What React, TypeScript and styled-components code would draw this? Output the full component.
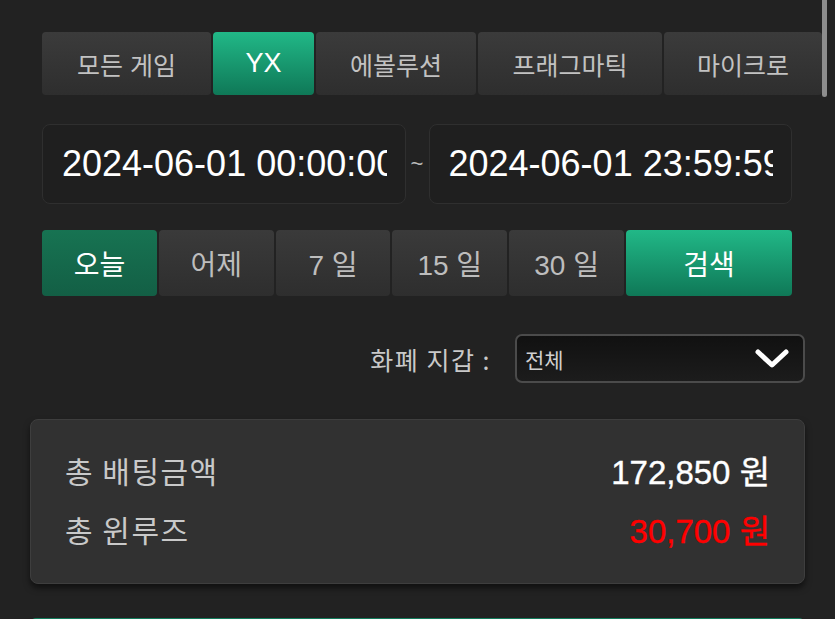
import React from "react";
import styled, { createGlobalStyle } from "styled-components";

const Global = createGlobalStyle`
  html, body { margin: 0; padding: 0; background: #222222; }
  body { font-family: "Liberation Sans", "Noto Sans CJK KR", sans-serif; overflow: hidden; }
  * { box-sizing: border-box; }
`;

const Page = styled.div`
  width: 835px;
  height: 619px;
  overflow: hidden;
  padding: 32px 30px 0 30px;
  display: flex;
  flex-direction: column;
  background: #222222;
  & > * { flex-shrink: 0; }
`;

const TabStrip = styled.div`
  margin: 0 -30px 0 12px;
  display: flex;
  gap: 2px;
  height: 63px;
  overflow: hidden;
`;

const Tab = styled.div<{ $w: number; $active?: boolean }>`
  flex: 0 0 ${(p) => p.$w}px;
  display: flex;
  align-items: center;
  justify-content: center;
  border-radius: 4px;
  font-family: "Liberation Sans", "Noto Sans CJK KR", sans-serif;
  color: ${(p) => (p.$active ? "#ffffff" : "#c2c2c2")};
  background: ${(p) =>
    p.$active
      ? "linear-gradient(180deg, #21b887 0%, #0f7857 100%)"
      : "linear-gradient(180deg, #3b3b3b 0%, #2e2e2e 100%)"};
  font-size: ${(p) => (p.$active ? "27px" : "25px")};
`;

const DateRow = styled.div`
  margin: 29px 13px 0 12px;
  display: grid;
  grid-template-columns: minmax(0, 1fr) 23px minmax(0, 1fr);
  align-items: center;
`;

const DateBox = styled.div`
  height: 80px;
  min-width: 0;
  border: 1px solid #2f2f2f;
  border-radius: 8px;
  background: #1f1f1f;
  padding: 0 18px 0 19px;
  display: flex;
  align-items: center;
`;

const DateText = styled.div`
  overflow: hidden;
  white-space: nowrap;
  min-width: 0;
  color: #ffffff;
  font-size: 36px;
  font-family: "Liberation Sans", sans-serif;
  line-height: 1.1;
`;

const Tilde = styled.div`
  text-align: center;
  color: #bbbbbb;
  font-size: 22px;
  font-family: "Liberation Sans", sans-serif;
`;

const PeriodRow = styled.div`
  margin: 26px 13px 0 12px;
  height: 66px;
  display: grid;
  grid-template-columns: repeat(5, 1fr) 166px;
  gap: 2px;
`;

const PeriodBtn = styled.div<{ $kind?: "today" | "search" }>`
  display: flex;
  align-items: center;
  justify-content: center;
  border-radius: 4px;
  font-size: 28px;
  font-family: "Liberation Sans", "Noto Sans CJK KR", sans-serif;
  color: ${(p) => (p.$kind ? "#ffffff" : "#bdbdbd")};
  background: ${(p) =>
    p.$kind === "today"
      ? "linear-gradient(180deg, #177352 0%, #135f45 100%)"
      : p.$kind === "search"
      ? "linear-gradient(180deg, #21b887 0%, #0f7857 100%)"
      : "linear-gradient(180deg, #3a3a3a 0%, #2e2e2e 100%)"};
`;

const WalletRow = styled.div`
  margin-top: 38px;
  display: flex;
  justify-content: flex-end;
  align-items: center;
  gap: 24px;
`;

const WalletLabel = styled.div`
  color: #c9c9c9;
  font-size: 25px;
  letter-spacing: 1.5px;
  font-family: "Noto Sans CJK KR", sans-serif;
`;

const Select = styled.div`
  width: 290px;
  height: 49px;
  border: 2px solid #4b4b4b;
  border-radius: 7px;
  background: linear-gradient(180deg, #111111 0%, #1c1c1c 100%);
  display: flex;
  align-items: center;
  justify-content: space-between;
  padding: 0 14px 0 8px;
`;

const SelectText = styled.span`
  color: #d0d0d0;
  font-size: 21px;
  font-family: "Noto Sans CJK KR", sans-serif;
`;

const Card = styled.div`
  margin-top: 36px;
  height: 165px;
  border: 1px solid #3e3e3e;
  border-radius: 8px;
  background: #313131;
  box-shadow: 0 4px 6px rgba(0, 0, 0, 0.55);
  padding: 30px 34px 0 34px;
  display: flex;
  flex-direction: column;
  gap: 19px;
`;

const CardRow = styled.div`
  height: 40px;
  display: flex;
  align-items: center;
  justify-content: space-between;
`;

const CardLabel = styled.span`
  color: #c9c9c9;
  font-size: 30px;
  letter-spacing: 1.5px;
  font-family: "Noto Sans CJK KR", sans-serif;
`;

const CardValue = styled.span<{ $red?: boolean }>`
  color: ${(p) => (p.$red ? "#ff0000" : "#ffffff")};
  font-size: 33px;
  font-family: "Liberation Sans", "Noto Sans CJK KR", sans-serif;
  -webkit-text-stroke: 0.4px ${(p) => (p.$red ? "#ff0000" : "#ffffff")};
`;

const BottomBar = styled.div`
  margin-top: 34px;
  height: 60px;
  border-radius: 6px 6px 0 0;
  background: linear-gradient(180deg, #127a5a 0%, #1a9d72 100%);
`;

const ScrollThumb = styled.div`
  position: fixed;
  top: -4px;
  right: 8px;
  width: 5px;
  height: 101px;
  border-radius: 3px;
  background: #8d8d8d;
`;

const tabs: { label: string; w: number; active?: boolean }[] = [
  { label: "모든 게임", w: 169 },
  { label: "YX", w: 101, active: true },
  { label: "에볼루션", w: 160 },
  { label: "프래그마틱", w: 184 },
  { label: "마이크로", w: 158 },
];

const periods = ["어제", "7 일", "15 일", "30 일"];

export default function App() {
  return (
    <>
      <Global />
      <Page>
        <TabStrip>
          {tabs.map((t) => (
            <Tab key={t.label} $w={t.w} $active={t.active}>
              {t.label}
            </Tab>
          ))}
        </TabStrip>
        <DateRow>
          <DateBox>
            <DateText>2024-06-01 00:00:00</DateText>
          </DateBox>
          <Tilde>~</Tilde>
          <DateBox>
            <DateText>2024-06-01 23:59:59</DateText>
          </DateBox>
        </DateRow>
        <PeriodRow>
          <PeriodBtn $kind="today">오늘</PeriodBtn>
          {periods.map((p) => (
            <PeriodBtn key={p}>{p}</PeriodBtn>
          ))}
          <PeriodBtn $kind="search">검색</PeriodBtn>
        </PeriodRow>
        <WalletRow>
          <WalletLabel>화폐 지갑 :</WalletLabel>
          <Select>
            <SelectText>전체</SelectText>
            <svg width="34" height="20" viewBox="0 0 34 20">
              <polyline
                points="3,3 17,16 31,3"
                fill="none"
                stroke="#ffffff"
                strokeWidth="5"
                strokeLinecap="round"
                strokeLinejoin="round"
              />
            </svg>
          </Select>
        </WalletRow>
        <Card>
          <CardRow>
            <CardLabel>총 배팅금액</CardLabel>
            <CardValue>172,850 원</CardValue>
          </CardRow>
          <CardRow>
            <CardLabel>총 윈루즈</CardLabel>
            <CardValue $red>30,700 원</CardValue>
          </CardRow>
        </Card>
        <BottomBar />
      </Page>
      <ScrollThumb />
    </>
  );
}
